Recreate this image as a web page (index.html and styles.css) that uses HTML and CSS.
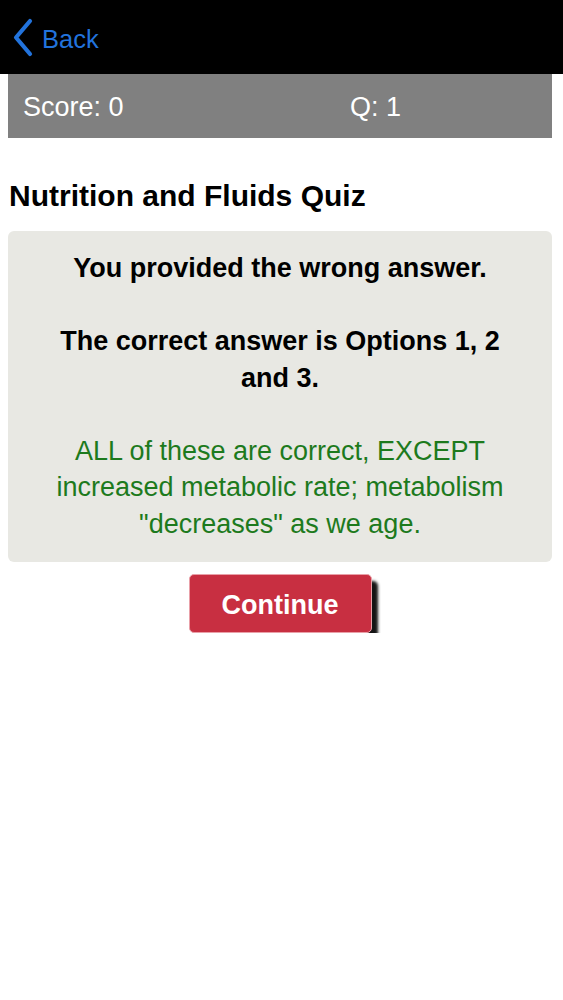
FILE: index.html
```html
<!DOCTYPE html>
<html>
<head>
<meta charset="utf-8">
<link rel="stylesheet" href="styles.css">
</head>
<body>
<header class="nav">
  <div class="back">
    <svg class="chev" width="22" height="40" viewBox="0 0 22 40"><polyline points="18,3 4,19.5 18,36" fill="none" stroke="#2273dc" stroke-width="4.2" stroke-linecap="round" stroke-linejoin="round"/></svg>
    <span class="back-label">Back</span>
  </div>
</header>
<div class="scorebar">
  <span class="score">Score: 0</span>
  <span class="qnum">Q: 1</span>
</div>
<h1 class="title">Nutrition and Fluids Quiz</h1>
<section class="card">
  <p class="msg">You provided the wrong answer.</p>
  <p class="msg">The correct answer is Options 1, 2 and 3.</p>
  <p class="explain">ALL of these are correct, EXCEPT increased metabolic rate; metabolism "decreases" as we age.</p>
</section>
<div class="actions">
  <button class="continue">Continue</button>
</div>
</body>
</html>
```
FILE: styles.css
```css
html, body {
  margin: 0;
  padding: 0;
  background: #fff;
  font-family: "Liberation Sans", Arial, sans-serif;
}
.nav {
  height: 74px;
  background: #000;
  display: flex;
  align-items: center;
}
.back {
  display: flex;
  align-items: center;
  padding-left: 12px;
  padding-top: 2px;
}
.chev {
  display: block;
}
.back-label {
  color: #2273dc;
  font-size: 25.5px;
  margin-left: 8px;
  margin-top: 2px;
}
.scorebar {
  margin: 0 11px 0 8px;
  height: 64px;
  background: #808080;
  display: flex;
  align-items: center;
  padding-left: 15px;
  padding-top: 2px;
  box-sizing: border-box;
  color: #fff;
  font-size: 27px;
}
.score {
  width: 327px;
}
.title {
  margin: 40px 0 17px 9px;
  font-size: 30px;
  line-height: 36px;
  font-weight: bold;
  color: #000;
}
.card {
  margin: 0 11px 0 8px;
  background: #e8e8e3;
  border-radius: 6px;
  padding: 19px 28px 20px;
  text-align: center;
  font-size: 27px;
  line-height: 36.5px;
}
.card p {
  margin: 0;
}
.msg {
  font-weight: bold;
  color: #000;
  margin-bottom: 36.5px !important;
}
.explain {
  color: #1d7a1d;
}
.actions {
  display: flex;
  justify-content: center;
  padding-top: 12px;
  padding-right: 3px;
}
.continue {
  width: 183px;
  height: 59px;
  background: #c82f41;
  color: #fff;
  border: 1px solid #e9a0a8;
  border-radius: 5px;
  font-family: "Liberation Sans", Arial, sans-serif;
  font-weight: bold;
  font-size: 27px;
  box-shadow: 6px 7px 3px rgba(0,0,0,0.92);
  padding: 4px 0 0;
}
```
